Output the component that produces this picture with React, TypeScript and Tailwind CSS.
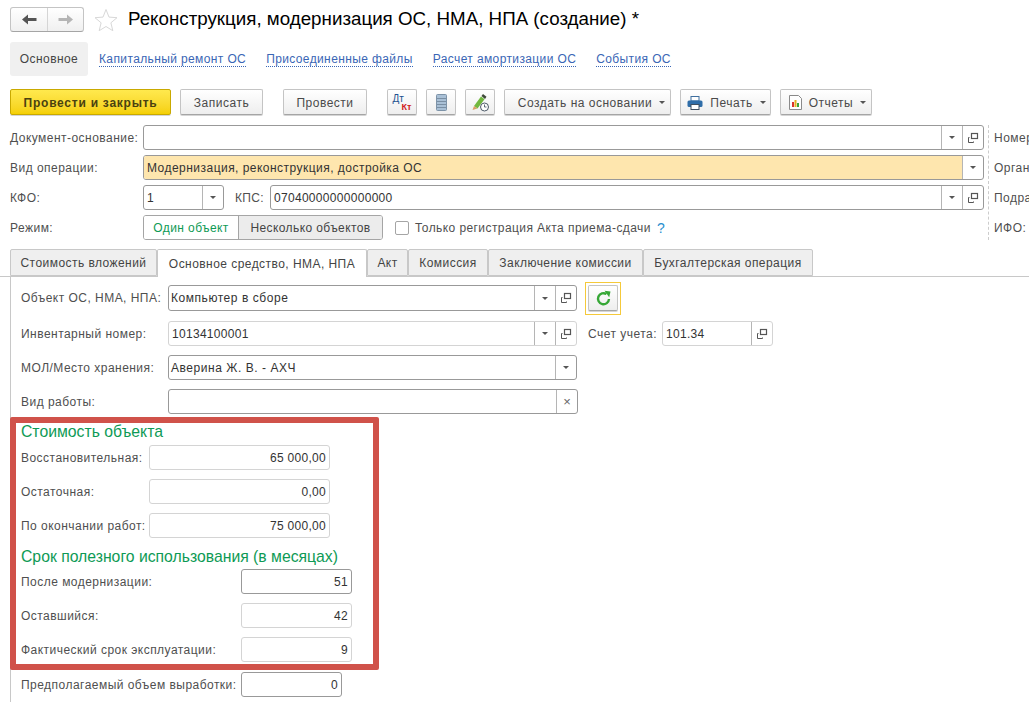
import React from "react";

const Caret = ({ c = "#555" }: { c?: string }) => (
  <svg width="6" height="3" viewBox="0 0 6 3"><path d="M0 0h6L3 3z" fill={c} /></svg>
);
const OpenIcon = () => (
  <svg width="12" height="12" viewBox="0 0 12 12" fill="none" stroke="#555" strokeWidth="1">
    <rect x="4.500" y="1.500" width="6" height="5" strokeWidth="1.200" />
    <path d="M2.500 5.500h-1v5h5v-1" />
  </svg>
);

function Sfx({ kind, w = 21 }: { kind: "drop" | "open" | "x"; w?: number }) {
  return (
    <span className="flex h-full shrink-0 items-center justify-center border-l border-[#b5b5b5]" style={{ width: w }}>
      {kind === "drop" && <Caret />}
      {kind === "open" && <OpenIcon />}
      {kind === "x" && <span className="text-[13px] leading-none text-[#666]">×</span>}
    </span>
  );
}

function Field({
  w, h = 25, value, right, dark, sfx = [],
}: {
  w: number; h?: number; value?: string; right?: boolean; dark?: boolean;
  sfx?: ("drop" | "open" | "x")[];
}) {
  const letters = /[А-Яа-я]/.test(value ?? "");
  return (
    <div
      className={`flex shrink-0 items-center overflow-hidden rounded-[3px] border bg-white ${dark ? "border-[#999999]" : "border-[#d4d4d4]"}`}
      style={{ width: w, height: h }}
    >
      <span className={`min-w-0 flex-1 text-[12px] whitespace-nowrap text-[#333] ${letters ? "px-[2px] tracking-[0.55px]" : "px-[3px] tracking-[0.3px]"} ${right ? "text-right" : ""}`}>{value}</span>
      {sfx.map((s, i) => <Sfx key={i} kind={s} />)}
    </div>
  );
}

function Btn({ w, children, className = "" }: { w: number; children: React.ReactNode; className?: string }) {
  return (
    <div
      className={`flex h-[26px] shrink-0 items-center justify-center gap-[7px] rounded-[2px] border border-[#c4c4c4] border-b-[#a5a5a5] bg-gradient-to-b from-white to-[#eeeeee] pt-px text-[12px] tracking-[0.5px] text-[#4a4a4a] shadow-[0_1px_0_#d5d5d5] ${className}`}
      style={{ width: w }}
    >
      {children}
    </div>
  );
}

function Label({ w, children }: { w: number; children: React.ReactNode }) {
  return <span className="shrink-0 text-[12px] tracking-[0.47px] whitespace-nowrap text-[#4f4f4f]" style={{ width: w }}>{children}</span>;
}

function Tab({ w, active, children }: { w: number; active?: boolean; children: React.ReactNode }) {
  return (
    <div
      className={`flex shrink-0 items-center justify-center rounded-t-[2px] border border-[#c8c8c8] text-[12px] tracking-[0.45px] whitespace-nowrap text-[#444] ${active ? "z-10 h-[28px] border-b-0 bg-white" : "h-[27px] bg-[#efefef]"}`}
      style={{ width: w }}
    >
      {children}
    </div>
  );
}

function Link({ children }: { children: React.ReactNode }) {
  return <span className="border-b border-dotted border-[#3a66b5] text-[12px] leading-[14px] tracking-[0.38px] text-[#3a66b5]">{children}</span>;
}

export default function App() {
  return (
    <div className="h-[702px] w-[1029px] overflow-hidden bg-white font-['Liberation_Sans',Arial,sans-serif]">
      {/* header */}
      <div className="flex h-[42px] items-start pt-[7px] pl-[10px]">
        <div className="flex h-[25px] w-[74px] rounded-[3px] border border-[#c4c4c4] border-b-[#a5a5a5] bg-gradient-to-b from-white to-[#f0f0f0]">
          <div className="flex w-[37px] items-center justify-center border-r border-[#d5d5d5]">
            <svg width="15" height="11" viewBox="0 0 15 11"><path d="M0 5.500 6 .5v3.500h8.500v3H6v3.500z" fill="#555" /></svg>
          </div>
          <div className="flex flex-1 items-center justify-center">
            <svg width="15" height="11" viewBox="0 0 15 11"><path d="M15 5.500 9 .5v3.500H.5v3H9v3.500z" fill="#b5b5b5" /></svg>
          </div>
        </div>
        <svg className="mt-px ml-[10px]" width="24" height="24" viewBox="0 0 24 24" fill="none" stroke="#d8d8d8">
          <path d="M12 1.500l3 7.600 8 .6-6.100 5.100 1.900 7.900L12 18.500l-6.800 4.200 1.900-7.900L1 9.700l8-.6z" />
        </svg>
        <h1 className="ml-[10px] text-[18.75px] leading-[24px] whitespace-nowrap text-black">Реконструкция, модернизация ОС, НМА, НПА (создание) *</h1>
      </div>

      {/* section tabs */}
      <div className="flex h-[34px] items-center pl-[10px]">
        <div className="flex h-[34px] w-[78px] items-center justify-center rounded-[3px] bg-[#f0f0f0] text-[12px] tracking-[0.42px] text-[#444]">Основное</div>
        <div className="mt-px ml-[11px] flex gap-[20px]">
          <Link>Капитальный ремонт ОС</Link>
          <Link>Присоединенные файлы</Link>
          <Link>Расчет амортизации ОС</Link>
          <Link>События ОС</Link>
        </div>
      </div>

      {/* toolbar */}
      <div className="mt-[13px] flex h-[26px] items-center pl-[10px]">
        <div className="flex h-[26px] w-[161px] items-center justify-center rounded-[2px] border border-[#c9a900] bg-gradient-to-b from-[#ffe94d] to-[#f5d000] pt-px text-[12px] font-bold tracking-[0.75px] text-[#4a4210] shadow-[0_1px_0_#d5d5d5]">Провести и закрыть</div>
        <Btn w={83} className="ml-[9px]">Записать</Btn>
        <Btn w={84} className="ml-[20px]">Провести</Btn>
        <Btn w={30} className="ml-[20px]">
          <span className="relative block h-[18px] w-[19px] font-bold tracking-normal">
            <span className="absolute top-0 left-0 text-[10px] leading-[10px] font-normal text-[#24508f]">Дт</span>
            <span className="absolute right-0 bottom-0 text-[9px] leading-[9px] text-[#d0201c]">Кт</span>
          </span>
        </Btn>
        <Btn w={30} className="ml-[9px]">
          <svg width="11" height="17" viewBox="0 0 11 17">
            <rect x=".5" y=".5" width="10" height="16" rx="1" fill="#a9c0d6" stroke="#7d93a8" />
            <path d="M1 4.500h9M1 7.500h9M1 10.500h9M1 13.500h9" stroke="#6e8397" strokeWidth=".8" />
          </svg>
        </Btn>
        <Btn w={30} className="ml-[9px]">
          <svg width="19" height="19" viewBox="0 0 19 19">
            <path d="M3 13 10 3.500l3.500 2.800L6.500 15.500z" fill="#72b83f" />
            <path d="M10.500 3 12 1l3.500 2.800L14 6z" fill="#3f4a3a" />
            <path d="M3 13l3.500 2.500L1.500 17z" fill="#d9a066" />
            <circle cx="13.500" cy="14" r="4" fill="#fff" stroke="#4d5a68" />
            <path d="M13.500 11.500V14h2" fill="none" stroke="#4d5a68" strokeWidth=".9" />
          </svg>
        </Btn>
        <Btn w={167} className="ml-[9px] pl-[8px]"><span>Создать на основании</span><Caret /></Btn>
        <Btn w={91} className="ml-[9px] pl-[2px]">
          <svg width="16" height="14" viewBox="0 0 16 14">
            <rect x="4" y=".5" width="8" height="4.500" fill="#fff" stroke="#3f6f9e" />
            <rect x=".5" y="4.500" width="15" height="6.500" rx="1.500" fill="#2f6da8" />
            <rect x="4" y="8.500" width="8" height="5" fill="#fff" stroke="#3f4f60" />
          </svg>
          <span>Печать</span><Caret />
        </Btn>
        <Btn w={92} className="ml-[9px] pl-[3px]">
          <svg width="13" height="15" viewBox="0 0 13 15">
            <path d="M.5.5h9l3 3v11H.5z" fill="#fff" stroke="#8a8a8a" />
            <rect x="3" y="7" width="2" height="5" fill="#d9362e" />
            <rect x="5.500" y="5" width="2" height="7" fill="#e8b020" />
            <rect x="8" y="8" width="2" height="4" fill="#3aa63a" />
          </svg>
          <span>Отчеты</span><Caret />
        </Btn>
      </div>

      {/* document fields */}
      <div className="relative mt-[10px] pl-[10px]">
        <div className="absolute top-0 left-[988px] h-[115px] border-l border-dashed border-[#cccccc]" />
        <div className="flex h-[25px] items-center">
          <Label w={133}>Документ-основание:</Label>
          <Field w={841} dark sfx={["drop", "open"]} />
          <span className="ml-[10px] text-[12px] tracking-[0.47px] whitespace-nowrap text-[#4f4f4f]">Номер</span>
        </div>
        <div className="mt-[5px] flex h-[25px] items-center">
          <Label w={133}>Вид операции:</Label>
          <div className="flex h-[25px] w-[841px] shrink-0 items-center overflow-hidden rounded-[3px] border border-[#999999] bg-white">
            <span className="flex h-full flex-1 items-center bg-[#fee6ae] px-[3px] text-[12px] tracking-[0.47px] text-[#333]">Модернизация, реконструкция, достройка ОС</span>
            <Sfx kind="drop" />
          </div>
          <span className="ml-[10px] text-[12px] tracking-[0.47px] whitespace-nowrap text-[#4f4f4f]">Орган</span>
        </div>
        <div className="mt-[5px] flex h-[25px] items-center">
          <Label w={133}>КФО:</Label>
          <Field w={81} dark value="1" sfx={["drop"]} />
          <span className="ml-[11px] w-[35px] shrink-0 text-[12px] tracking-[0.3px] text-[#4f4f4f]">КПС:</span>
          <Field w={714} dark value="07040000000000000" sfx={["drop", "open"]} />
          <span className="ml-[10px] text-[12px] tracking-[0.47px] whitespace-nowrap text-[#4f4f4f]">Подра</span>
        </div>
        <div className="mt-[5px] flex h-[25px] items-center">
          <Label w={133}>Режим:</Label>
          <div className="flex h-[25px] w-[240px] shrink-0 overflow-hidden rounded-[3px] border border-[#a5a5a5] text-[12px] tracking-[0.4px]">
            <span className="flex w-[95px] items-center justify-center border-r border-[#a5a5a5] bg-white text-[#0e9a55]">Один объект</span>
            <span className="flex flex-1 items-center justify-center bg-[#ececec] text-[#444]">Несколько объектов</span>
          </div>
          <span className="ml-[12px] h-[14px] w-[14px] shrink-0 rounded-[2px] border border-[#a5a5a5] bg-white" />
          <span className="ml-[6px] w-[236px] shrink-0 text-[12px] tracking-[0.42px] whitespace-nowrap text-[#4f4f4f]">Только регистрация Акта приема-сдачи</span>
          <span className="ml-[6px] w-[10px] shrink-0 text-[14px] leading-none text-[#2a8fcf]">?</span>
          <span className="ml-[327px] text-[12px] tracking-[0.47px] whitespace-nowrap text-[#4f4f4f]">ИФО:</span>
        </div>
      </div>

      {/* tabs */}
      <div className="mt-[9px] flex h-[28px] items-start border-b border-[#c8c8c8] pl-[10px]">
        <Tab w={147}>Стоимость вложений</Tab>
        <Tab w={210} active>Основное средство, НМА, НПА</Tab>
        <Tab w={41}>Акт</Tab>
        <Tab w={80}>Комиссия</Tab>
        <Tab w={155}>Заключение комиссии</Tab>
        <Tab w={170}>Бухгалтерская операция</Tab>
      </div>

      {/* panel */}
      <div className="ml-[10px] h-[430px] border-l border-[#c8c8c8] pt-[8px]">
        <div className="flex h-[26px] items-center pl-[10px]">
          <Label w={147}>Объект ОС, НМА, НПА:</Label>
          <Field w={409} h={26} dark value="Компьютер в сборе" sfx={["drop", "open"]} />
          <div className="-my-[4px] ml-[8px] flex h-[33px] w-[36px] items-center justify-center border border-[#f5c93a]">
            <Btn w={30}>
              <svg width="17" height="17" viewBox="0 0 17 17" fill="none">
                <path d="M14 9A5.500 5.500 0 1 1 11.500 4.100" stroke="#36a736" strokeWidth="2.400" />
                <path d="M9.500 .8l6 .7-1.300 5.800z" fill="#36a736" />
              </svg>
            </Btn>
          </div>
        </div>
        <div className="mt-[10px] flex h-[25px] items-center pl-[10px]">
          <Label w={147}>Инвентарный номер:</Label>
          <Field w={409} value="10134100001" sfx={["drop", "open"]} />
          <span className="ml-[11px] w-[74px] shrink-0 text-[12px] tracking-[0.47px] whitespace-nowrap text-[#4f4f4f]">Счет учета:</span>
          <Field w={111} value="101.34" sfx={["open"]} />
        </div>
        <div className="mt-[9px] flex h-[25px] items-center pl-[10px]">
          <Label w={147}>МОЛ/Место хранения:</Label>
          <Field w={409} dark value="Аверина Ж. В. - АХЧ" sfx={["drop"]} />
        </div>
        <div className="mt-[9px] flex h-[25px] items-center pl-[10px]">
          <Label w={147}>Вид работы:</Label>
          <Field w={410} dark sfx={["x"]} />
        </div>

        {/* highlighted block */}
        <div className="mt-[3px] -ml-px h-[253px] w-[369px] rounded-[2px] border-[6px] border-[#d0524a] pl-[5px]">
          <div className="text-[15.75px] leading-[18px] whitespace-nowrap text-[#0e9a55]">Стоимость объекта</div>
          <div className="mt-[4px] flex h-[25px] items-center">
            <Label w={128}>Восстановительная:</Label>
            <Field w={181} right value="65 000,00" />
          </div>
          <div className="mt-[9px] flex h-[25px] items-center">
            <Label w={128}>Остаточная:</Label>
            <Field w={181} right value="0,00" />
          </div>
          <div className="mt-[9px] flex h-[25px] items-center">
            <Label w={128}>По окончании работ:</Label>
            <Field w={181} right value="75 000,00" />
          </div>
          <div className="mt-[10px] text-[15.75px] leading-[18px] whitespace-nowrap text-[#0e9a55]">Срок полезного использования (в месяцах)</div>
          <div className="mt-[3px] flex h-[25px] items-center">
            <Label w={220}>После модернизации:</Label>
            <Field w={111} right dark value="51" />
          </div>
          <div className="mt-[9px] flex h-[25px] items-center">
            <Label w={220}>Оставшийся:</Label>
            <Field w={111} right value="42" />
          </div>
          <div className="mt-[9px] flex h-[25px] items-center">
            <Label w={220}>Фактический срок эксплуатации:</Label>
            <Field w={111} right value="9" />
          </div>
        </div>

        <div className="mt-[2px] flex h-[25px] items-center pl-[10px]">
          <Label w={220}>Предполагаемый объем выработки:</Label>
          <Field w={101} right dark value="0" />
        </div>
      </div>
    </div>
  );
}
